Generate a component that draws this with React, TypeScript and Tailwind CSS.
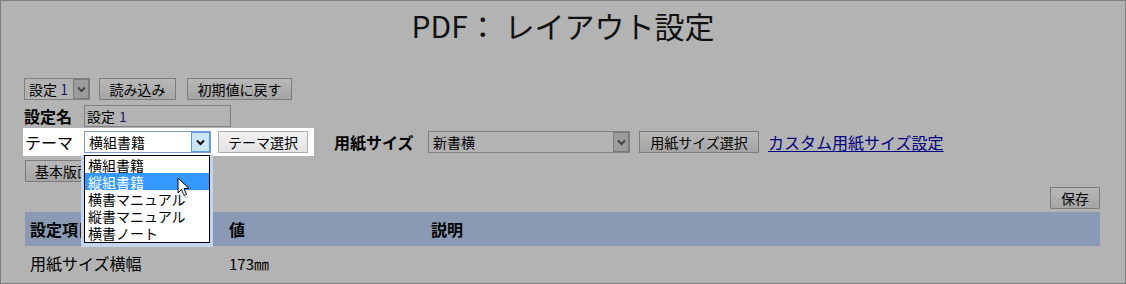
import React from "react";

const font = { fontFamily: '"Noto Sans CJK JP", "Noto Sans", sans-serif' };

function Chevron({ color = "#333" }: { color?: string }) {
  return (
    <svg width="9" height="7" viewBox="0 0 9 7">
      <path d="M1 1.5 L4.5 5 L8 1.5" fill="none" stroke={color} strokeWidth="2" />
    </svg>
  );
}

function GrayBtn({ children, w }: { children: React.ReactNode; w: string }) {
  return (
    <div
      className={`${w} h-[22px] flex items-center justify-center border border-[#7c7c7c] bg-gradient-to-b from-[#b8b8b8] to-[#a4a4a4] text-[14px] text-black leading-none`}
    >
      {children}
    </div>
  );
}

export default function App() {
  const items = ["横組書籍", "縦組書籍", "横書マニュアル", "縦書マニュアル", "横書ノート"];
  return (
    <div
      className="relative w-[1126px] h-[284px] overflow-hidden border border-[#7f7f7f] bg-[#b3b3b3] text-black"
      style={font}
    >
      <div className="pt-[6px] text-center text-[30px] leading-[36px] text-[#111]">PDF： レイアウト設定</div>

      <div className="pl-[23px] pr-[25px]">
        {/* row 1 */}
        <div className="mt-[35px] flex items-center h-[22px]">
          <div className="w-[66px] h-[22px] flex items-center border border-[#808080] bg-[#b3b3b3]">
            <span className="pl-[4px] text-[14px] leading-none flex-1">
              設定 <span className="text-[#1a1a60]">1</span>
            </span>
            <div className="w-[16px] h-[20px] flex items-center justify-center border border-[#7a7a7a] bg-[#9c9c9c]">
              <Chevron color="#444" />
            </div>
          </div>
          <div className="ml-[9px]">
            <GrayBtn w="w-[77px]">読み込み</GrayBtn>
          </div>
          <div className="ml-[11px]">
            <GrayBtn w="w-[105px]">初期値に戻す</GrayBtn>
          </div>
        </div>

        {/* row 2 */}
        <div className="mt-[5px] flex items-center h-[22px]">
          <span className="text-[16px] font-bold leading-none w-[60px]">設定名</span>
          <div className="w-[147px] h-[22px] flex items-center border border-[#808080] pl-[2px] text-[14px] leading-none">
            設定 <span className="ml-[4px] text-[#1a1a60]">1</span>
          </div>
        </div>

        {/* row 3 */}
        <div className="mt-[1px] flex items-center h-[28px]">
          <div className="-ml-[1px] w-[291px] h-[28px] flex items-center bg-white pl-[2px]">
            <span className="text-[16px] leading-none w-[59px]">テーマ</span>
            <div className="w-[127px] h-[22px] flex items-center border border-[#7a9cc8] bg-white">
              <span className="pl-[4px] text-[14px] leading-none flex-1">横組書籍</span>
              <div className="w-[19px] h-[20px] flex items-center justify-center border border-[#569de5] bg-[#cce4f7]">
                <Chevron color="#111" />
              </div>
            </div>
            <div className="ml-[7px] w-[90px] h-[22px] flex items-center justify-center border border-[#adadad] bg-gradient-to-b from-[#f2f2f2] to-[#e3e3e3] text-[14px] leading-none">
              テーマ選択
            </div>
          </div>
          <span className="ml-[20px] text-[16px] font-bold leading-none w-[94px]">用紙サイズ</span>
          <div className="w-[202px] h-[22px] flex items-center border border-[#808080]">
            <span className="pl-[4px] text-[14px] leading-none flex-1">新書横</span>
            <div className="w-[16px] h-[20px] flex items-center justify-center border border-[#7a7a7a] bg-[#9c9c9c]">
              <Chevron color="#444" />
            </div>
          </div>
          <div className="ml-[9px]">
            <GrayBtn w="w-[120px]">用紙サイズ選択</GrayBtn>
          </div>
          <a className="ml-[9px] text-[16px] leading-none text-[#000080] underline underline-offset-2">
            カスタム用紙サイズ設定
          </a>
        </div>

        {/* row 4 */}
        <div className="mt-[4px] flex items-center h-[22px]">
          <div className="ml-[1px] w-[110px] h-[22px] flex items-center pl-[9px] border border-[#7c7c7c] bg-gradient-to-b from-[#b8b8b8] to-[#a4a4a4] text-[14px] leading-none">
            基本版面設定
          </div>
        </div>

        {/* save */}
        <div className="mt-[5px] flex justify-end">
          <GrayBtn w="w-[50px]">保存</GrayBtn>
        </div>

        {/* table header */}
        <div className="mt-[3px] ml-[1px] h-[34px] flex items-center bg-[#8a9ab4] text-[16px] font-bold leading-none">
          <span className="pl-[5px] w-[204px]">設定項目</span>
          <span className="w-[202px]">値</span>
          <span>説明</span>
        </div>
        <div className="ml-[1px] h-[34px] flex items-center text-[16px] leading-none">
          <span className="pl-[5px] w-[204px]">用紙サイズ横幅</span>
          <span className="text-[15px]">173㎜</span>
        </div>
      </div>

      {/* dropdown list overlay */}
      <div className="absolute left-[80px] top-[154px] w-[132px] border-l-[3px] border-r-[3px] border-b-[4px] border-[#c4d5f0]">
        <div className="border border-black bg-white pb-[1px]">
          {items.map((t, i) => (
            <div
              key={t}
              className={`h-[17px] pl-[3px] flex items-center text-[14px] leading-none ${
                i === 1 ? "bg-[#3399ff] text-white" : "text-black"
              }`}
            >
              {t}
            </div>
          ))}
        </div>
      </div>

      {/* cursor */}
      <svg className="absolute left-[176px] top-[176px]" width="14" height="22" viewBox="0 0 14 22">
        <path
          d="M1 1 L1 16 L4.5 12.5 L7 18.5 L9.5 17.5 L7 11.5 L12 11.5 Z"
          fill="white"
          stroke="black"
          strokeWidth="1"
          strokeLinejoin="round"
        />
        <path d="M2.5 17.5 L5.5 14.5 L8 20.5 L11 19.5" fill="none" stroke="#9a9a9a" strokeWidth="1" opacity="0.6" />
      </svg>
    </div>
  );
}
